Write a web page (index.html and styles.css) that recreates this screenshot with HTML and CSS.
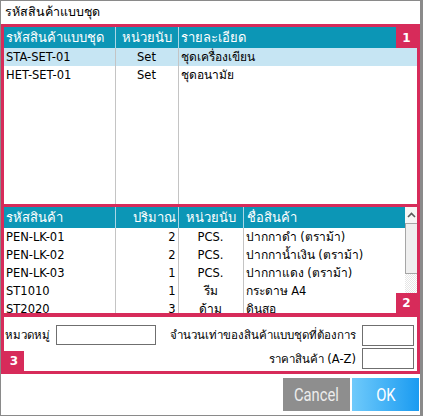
FILE: index.html
```html
<!DOCTYPE html>
<html lang="th">
<head>
<meta charset="utf-8">
<link rel="stylesheet" href="styles.css">
</head>
<body>
<div class="win">
  <div class="title">รหัสสินค้าแบบชุด</div>

  <div class="panel p1">
    <table class="grid">
      <colgroup><col class="w1"><col class="w2"><col></colgroup>
      <thead>
        <tr><th>รหัสสินค้าแบบชุด</th><th class="ctr">หน่วยนับ</th><th>รายละเอียด</th></tr>
      </thead>
      <tbody>
        <tr class="sel"><td>STA-SET-01</td><td class="ctr">Set</td><td><span class="th">ชุดเครื่องเขียน</span></td></tr>
        <tr><td>HET-SET-01</td><td class="ctr">Set</td><td><span class="th">ชุดอนามัย</span></td></tr>
        <tr class="fill"><td></td><td></td><td></td></tr>
      </tbody>
    </table>
    <span class="badge b1">1</span>
  </div>

  <div class="panel p2">
    <table class="grid">
      <colgroup><col class="w1"><col class="w2"><col class="w3"><col></colgroup>
      <thead>
        <tr><th>รหัสสินค้า</th><th class="rgt">ปริมาณ</th><th class="ctr">หน่วยนับ</th><th class="last">ชื่อสินค้า</th></tr>
      </thead>
      <tbody>
        <tr><td>PEN-LK-01</td><td class="rgt">2</td><td class="ctr">PCS.</td><td><span class="th">ปากกาดำ</span> (<span class="th">ตราม้า</span>)</td></tr>
        <tr><td>PEN-LK-02</td><td class="rgt">2</td><td class="ctr">PCS.</td><td><span class="th">ปากกาน้ำเงิน</span> (<span class="th">ตราม้า</span>)</td></tr>
        <tr><td>PEN-LK-03</td><td class="rgt">1</td><td class="ctr">PCS.</td><td><span class="th">ปากกาแดง</span> (<span class="th">ตราม้า</span>)</td></tr>
        <tr><td>ST1010</td><td class="rgt">1</td><td class="ctr"><span class="th">รีม</span></td><td><span class="th">กระดาษ</span> A4</td></tr>
        <tr><td>ST2020</td><td class="rgt">3</td><td class="ctr"><span class="th">ด้าม</span></td><td><span class="th">ดินสอ</span></td></tr>
      </tbody>
    </table>
    <div class="sbar">
      <div class="sb-up"><svg width="9" height="6" viewBox="0 0 9 6"><path d="M1 5 L4.5 1.5 L8 5" fill="none" stroke="#5a5a5a" stroke-width="1.6"/></svg></div>
      <div class="sb-thumb"></div>
      <div class="sb-track"></div>
    </div>
    <span class="badge b2">2</span>
  </div>

  <div class="panel p3">
    <div class="form">
      <label class="l1">หมวดหมู่</label>
      <div class="inp i1"></div>
      <label class="l2">จำนวนเท่าของสินค้าแบบชุดที่ต้องการ</label>
      <div class="inp i2"></div>
      <label class="l3">ราคาสินค้า (A-Z)</label>
      <div class="inp i3"></div>
    </div>
    <span class="badge b3">3</span>
  </div>

  <div class="buttons">
    <div class="btn cancel"><span>Cancel</span></div>
    <div class="btn ok"><span>OK</span></div>
  </div>
</div>
</body>
</html>
```

FILE: styles.css
```css
html, body {
  margin: 0;
  padding: 0;
  background: #ffffff;
}
.win {
  width: 423px;
  height: 416px;
  box-sizing: border-box;
  border: 1px solid #8a8a8a;
  border-right-width: 3px;
  background: #ffffff;
  font-family: "DejaVu Sans", "Noto Sans", sans-serif;
  font-size: 11.5px;
  color: #000;
  display: flex;
  flex-direction: column;
}
.title {
  height: 23px;
  line-height: 22px;
  padding-left: 4px;
  font-size: 12.5px;
  flex-shrink: 0;
}
.panel {
  position: relative;
  border: 3px solid #d72b5a;
  display: flex;
  overflow: hidden;
  flex-shrink: 0;
}
.p1 {
  height: 177px;
}
.p2 {
  border-top: 0;
  border-bottom-width: 4px;
  height: 110px;
  box-sizing: border-box;
}
.p3 {
  border-top: 0;
  height: 57px;
  box-sizing: border-box;
}
.grid {
  flex: 1;
  border-collapse: collapse;
  table-layout: fixed;
  height: 100%;
}
.p2 .grid {
  height: auto;
  align-self: flex-start;
}
.w1 { width: 111px; }
.w2 { width: 63px; }
.w3 { width: 65px; }
.grid th {
  height: 21px;
  line-height: 16px;
  padding: 0 2px;
  background: #0c96b6;
  color: #ffffff;
  font-weight: normal;
  font-size: 13px;
  text-align: left;
  border-right: 1px solid #a9d6e6;
  white-space: nowrap;
  overflow: hidden;
  box-sizing: border-box;
}
.grid th:last-child { border-right: 0; }
.grid td {
  height: 18px;
  line-height: 15px;
  padding: 0 2px;
  border-right: 1px solid #c4c4c4;
  white-space: nowrap;
  overflow: hidden;
  vertical-align: middle;
  box-sizing: border-box;
}
.grid td:last-child { border-right: 0; }
.grid tr.fill td { height: auto; }
.grid .ctr { text-align: center; }
.grid .rgt { text-align: right; }
.grid th.last { padding-left: 3px; }
.grid tr.sel td { background: #c6e5f3; }
.th { font-size: 12px; }

.badge {
  position: absolute;
  background: #d72b5a;
  color: #ffffff;
  font-weight: bold;
  font-size: 12px;
  display: flex;
  align-items: center;
  justify-content: center;
}
.b1 { top: 0; right: 0; width: 21px; height: 21px; }
.b2 { bottom: 0; right: 0; width: 21px; height: 20px; }
.b3 { bottom: 0; left: 0; width: 20px; height: 20px; }

.sbar {
  width: 12px;
  display: flex;
  flex-direction: column;
  background: #ffffff;
}
.sb-up {
  height: 16px;
  display: flex;
  align-items: center;
  justify-content: center;
  background: #f6f6f6;
}
.sb-thumb {
  height: 49px;
  background: #efefef;
  border: 1px solid #a6a6a6;
  border-right: 0;
}
.sb-track {
  flex: 1;
  background-color: #ffffff;
  background-image: repeating-conic-gradient(#e6e6e6 0 25%, #ffffff 0 50%);
  background-size: 2px 2px;
}

.form {
  flex: 1;
  min-width: 0;
  display: grid;
  grid-template-columns: auto 100px minmax(0, 1fr) 52px;
  grid-template-rows: 20px 21px;
  column-gap: 6px;
  row-gap: 3px;
  padding: 8px 3px 0 1px;
  align-items: center;
  font-size: 11.5px;
  line-height: 16px;
}
.form label { white-space: nowrap; }
.l1 { grid-column: 1; grid-row: 1; }
.i1 { grid-column: 2; grid-row: 1; height: 20px; }
.l2 { grid-column: 3; grid-row: 1; justify-self: end; }
.i2 { grid-column: 4; grid-row: 1; height: 21px; }
.l3 { grid-column: 3; grid-row: 2; justify-self: end; }
.i3 { grid-column: 4; grid-row: 2; height: 21px; }
.inp {
  box-sizing: border-box;
  border: 1px solid #6f6f6f;
  background: #ffffff;
}

.buttons {
  display: flex;
  justify-content: flex-end;
  gap: 2px;
  margin-top: 4px;
  padding-right: 1px;
  flex-shrink: 0;
}
.btn {
  width: 67px;
  height: 33px;
  display: flex;
  align-items: center;
  justify-content: center;
  color: #ffffff;
  font-family: "Roboto", "Open Sans", sans-serif;
  font-size: 18px;
}
.btn span {
  display: inline-block;
  transform: scaleX(0.82);
}
.cancel {
  background: #8e8e8e;
  color: #ececec;
}
.ok {
  background: linear-gradient(to right, #6fcafb, #1a9bf1);
}
```
